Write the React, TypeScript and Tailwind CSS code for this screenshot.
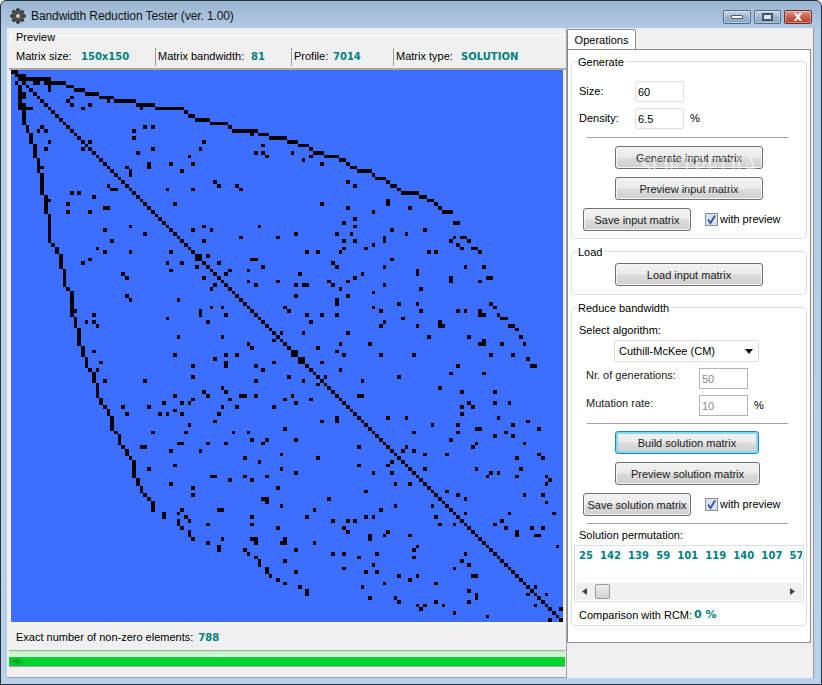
import type { ReactNode } from "react";

// Matrix cells were read from 3x crops, so every list keeps its crop origin.
type Quad = { ox: number; oy: number; dots: string; h: number[][]; v: number[][] };

const quads: Quad[] = [
  {
    ox: 0,
    oy: 60,
    dots: "215,112 204,123 215,134 270,134 248,145 325,123 424,145 435,200 458,200 402,212 402,234 126,200 115,212 137,212 148,245 137,267 248,245 270,245 248,267 612,245 601,267 458,267 413,278 568,289 789,256 767,278 789,278 800,289 756,223 447,311 447,322 513,311 579,311 546,333 381,322 391,333 391,344 126,322 645,366 656,377 711,377 722,388 325,377 336,388 347,388 502,388 579,388 215,399 237,399 281,410 204,432 314,443 325,443 525,432 148,421 204,455 270,455 391,498 612,498 778,498 314,509 579,509 634,509 435,520 722,531 834,531 336,542 612,542 292,564 314,575 391,575 513,575 623,587 270,598 248,608 502,608 546,608 656,608 756,598 767,598 590,620 789,620 513,631 689,631 678,642 745,631 369,642 380,653 612,653 745,664 834,664 645,675 634,686 767,675 381,708 391,719 535,719 634,741 667,741 601,752 601,763 678,763 281,763 502,774 259,785 281,785 292,797 623,785 535,830 667,830 590,587 601,587 590,598 601,598 226,752",
    h: [
      [35, 33, 55], [46, 44, 77], [57, 55, 150], [68, 44, 55], [68, 66, 77], [68, 100, 120], [68, 132, 197],
      [79, 198, 220], [90, 222, 255], [101, 255, 297], [112, 297, 342], [123, 342, 408], [134, 408, 465],
      [145, 465, 552], [156, 552, 563], [167, 563, 585], [178, 585, 630], [189, 630, 685], [200, 685, 696],
      [212, 696, 773], [223, 773, 807], [234, 807, 840], [101, 55, 77], [112, 55, 77], [134, 55, 77], [145, 55, 99],
    ],
    v: [
      [60, 75, 150], [148, 75, 95], [72, 150, 195], [83, 195, 220], [93, 220, 250], [104, 250, 292], [115, 292, 340],
      [126, 340, 404], [137, 404, 460], [148, 460, 548], [159, 548, 559], [170, 559, 582], [183, 582, 626],
      [193, 626, 682], [204, 682, 693], [215, 693, 770], [226, 770, 803], [237, 803, 840],
    ],
  },
  {
    ox: 280,
    oy: 60,
    dots: "37,278 70,300 92,289 126,311 204,366 225,377 126,432 204,443 324,421 324,432 390,443 280,455 225,477 192,488 225,499 48,521 171,521 214,521 336,509 435,509 380,521 192,543 225,543 313,532 313,543 280,554 192,565 258,565 81,576 114,576 181,576 447,576 468,576 336,598 159,609 171,620 313,620 556,620 612,620 60,642 247,642 412,631 412,642 225,653 204,664 147,664 159,675 48,675 70,675 81,675 313,675 513,653 513,664 600,664 622,653 633,653 181,686 423,686 280,697 48,708 204,708 171,719 171,730 357,730 412,730 15,741 26,752 280,741 302,752 423,752 534,752 556,752 600,752 600,763 611,763 81,763 126,763 171,763 369,775 92,785 313,785 302,797 412,797 480,785 480,797 490,797 70,818 204,818 4,818 447,830 567,830 523,532 513,543 534,554 545,565 567,543 545,532 556,532 578,565 589,565 600,576",
    h: [
      [234, 0, 20], [245, 20, 55], [256, 55, 88], [267, 88, 99], [278, 99, 132], [289, 132, 176], [300, 176, 198],
      [311, 198, 209], [322, 209, 231], [333, 231, 275], [344, 275, 286], [355, 286, 319], [366, 319, 330],
      [377, 330, 352], [388, 352, 363], [399, 363, 417], [410, 417, 440], [421, 440, 462], [432, 462, 473],
      [443, 473, 484], [455, 484, 520], [488, 520, 540], [732, 627, 638], [743, 638, 650], [765, 650, 660],
      [775, 660, 684], [797, 684, 705], [808, 705, 716], [830, 716, 728],
    ],
    v: [],
  },
  {
    ox: 0,
    oy: 340,
    dots: "745,12 756,23 822,2 281,34 525,45 678,45 711,45 645,56 303,67 822,67 579,78 678,67 678,78 767,78 292,89 789,89 579,111 315,122 435,122 767,122 667,144 612,155 678,155 525,167 623,167 722,167 733,167 767,167 690,178 579,178 568,188 546,188 491,188 369,200 447,200 667,200 711,200 822,200 525,211 381,222 480,222 502,222 546,222 656,222 645,244 568,255 458,277 557,277 700,277 745,277 756,299 800,299 789,310 535,310 546,310 623,310 678,310 425,321 436,321 513,332 601,332 735,354 778,365 525,376 447,387 635,409 646,409 735,409 800,409 690,420 756,420 513,432 579,443 834,443 579,465 789,477 800,477 800,487 546,509 656,509 667,509 535,520 558,531 756,531 568,543 535,543 535,553 624,553 756,553 546,564 834,564 568,575 568,586 579,597 667,597 756,597 767,597 767,608 624,608 656,620 656,631 735,630 745,642 767,653 778,664 778,675 800,686 800,697 811,708 834,719",
    h: [],
    v: [
      [237, 0, 17], [248, 17, 50], [259, 50, 83], [270, 83, 95], [281, 95, 128], [292, 128, 172], [303, 172, 194],
      [314, 194, 205], [325, 205, 227], [336, 227, 272], [347, 272, 283], [358, 283, 315], [369, 315, 327],
      [380, 327, 348], [391, 348, 360], [402, 360, 413], [413, 413, 437], [424, 437, 459], [435, 459, 470],
      [447, 470, 482], [458, 482, 515], [491, 515, 537],
    ],
  },
  {
    ox: 280,
    oy: 340,
    dots: "114,23 181,12 270,12 600,12 611,12 611,4 666,12 733,12 170,34 192,45 303,45 402,45 633,45 699,45 744,56 126,67 755,78 766,78 534,78 181,89 513,100 612,100 27,111 70,122 114,111 136,111 247,122 357,111 114,133 480,144 546,155 645,155 37,167 15,178 48,188 92,178 237,167 247,167 567,188 645,188 689,188 546,200 579,200 546,222 324,233 380,233 656,233 170,233 170,244 126,244 744,244 458,255 534,255 699,255 15,266 590,266 601,266 777,266 402,277 534,277 678,277 645,288 699,288 48,299 513,299 733,310 589,310 578,321 237,321 380,321 369,332 402,332 435,343 501,343 777,343 4,343 114,354 711,354 789,354 336,365 324,376 237,376 4,387 435,387 590,387 722,387 48,399 280,399 336,399 633,399 656,399 622,410 711,410 800,410 810,420 800,432 346,432 390,432 258,454 501,454 147,477 534,465 556,477 733,465 789,465 800,487 4,498 346,498 458,498 103,510 303,510 556,520 689,520 822,520 81,531 258,531 280,531 468,531 159,543 204,543 225,543 480,553 523,553 645,553 666,543 192,564 678,564 756,564 789,564 204,576 324,576 314,586 270,587 270,597 390,587 711,576 711,586 766,586 777,586 15,597 4,608 15,608 103,608 412,620 402,630 48,630 832,620 159,642 192,642 291,642 556,642 237,653 402,653 15,663 546,663 280,675 567,675 192,686 523,686 48,696 258,696 291,696 357,708 412,708 578,708 589,708 390,719 15,730 314,730 468,730 60,741 247,741 81,752 81,763 567,752 589,763 589,774 270,774 346,774 357,786 468,786 567,786 412,797 435,797 423,807 490,797 523,819 622,829 766,741 744,763 799,763 766,797 843,807 810,840 843,840 38,34 49,34 38,45 49,45 60,56 71,56 60,67 71,67",
    h: [],
    v: [],
  },
];

const CELL = 11.04;

const buildCells = () => {
  const seen = new Set<string>();
  const add = (c: number, r: number) => {
    if (c >= 0 && c < 150 && r >= 0 && r < 150) seen.add(c + "," + r);
  };
  for (let i = 0; i < 150; i++) add(i, i);
  for (const q of quads) {
    const bx = 3 * q.ox - 33;
    const by = 3 * q.oy - 210;
    const fill = (x1: number, y1: number, x2: number, y2: number) => {
      for (let c = Math.floor((x1 + bx) / CELL) - 1; c <= (x2 + bx) / CELL + 1; c++) {
        for (let r = Math.floor((y1 + by) / CELL) - 1; r <= (y2 + by) / CELL + 1; r++) {
          const cx = (c + 0.5) * CELL - bx;
          const cy = (r + 0.5) * CELL - by;
          if (cx >= x1 && cx <= x2 && cy >= y1 && cy <= y2) add(c, r);
        }
      }
    };
    for (const d of q.dots.split(" ")) {
      const [x, y] = d.split(",").map(Number);
      add(Math.floor((x + bx) / CELL), Math.floor((y + by) / CELL));
    }
    for (const [y, x1, x2] of q.h) fill(x1, y - 5, x2, y + 5);
    for (const [x, y1, y2] of q.v) fill(x - 5, y1, x + 5, y2);
  }
  return [...seen].map((s) => s.split(",").map(Number));
};

const cells = buildCells();

const Value = ({ children, className = "" }: { children: ReactNode; className?: string }) => (
  <span className={"font-['DejaVu_Sans'] text-[10px] font-bold text-[#008080] " + className}>{children}</span>
);

const Button = ({ label, className = "" }: { label: string; className?: string }) => (
  <button
    className={
      "h-[23px] shrink-0 rounded-[3px] border border-[#707070] bg-[linear-gradient(#f2f2f2,#ebebeb_48%,#dcdcdc_52%,#cfcfcf)] text-center leading-[20px] text-[#1a1a1a] shadow-[inset_0_0_0_1px_#f6f6f6] " +
      className
    }
  >
    {label}
  </button>
);

const Field = ({ value, disabled = false }: { value: string; disabled?: boolean }) => (
  <div
    className={
      "h-[21px] w-[49px] shrink-0 border bg-white pl-[2px] leading-[20px] " +
      (disabled ? "border-[#b4b4b4] text-[#8a8a8a]" : "rounded-[2px] border-[#dbdfe6] text-black")
    }
  >
    {value}
  </div>
);

const PreviewCheck = () => (
  <div className="ml-[14px] flex items-center gap-[2px]">
    <div className="flex h-[13px] w-[13px] items-center justify-center border border-[#8e8f8f] bg-[#d8e3f0]">
      <svg width="11" height="11" viewBox="0 0 11 11">
        <path d="M2 5.5 L4.5 9 L9 1.5" fill="none" stroke="#3a50a8" strokeWidth="1.8" />
      </svg>
    </div>
    <span>with preview</span>
  </div>
);

const Group = ({ title, className, children }: { title: string; className: string; children: ReactNode }) => (
  <div className={"relative mx-[3px] rounded-[4px] border border-[#d9dfe8] " + className}>
    <span className="absolute left-[5px] top-[-7px] bg-white pl-[1px] pr-[2px] leading-[14px]">{title}</span>
    {children}
  </div>
);

const Rule = ({ className = "" }: { className?: string }) => (
  <div className={"ml-[15px] h-px w-[201px] bg-[#a0a0a0] " + className} />
);

const Gear = () => (
  <svg width="16" height="16" viewBox="0 0 16 16" className="shrink-0">
    <g fill="#3c3c3c">
      {[0, 45, 90, 135, 180, 225, 270, 315].map((a) => (
        <rect key={a} x="6.5" y="0.5" width="3" height="15" transform={`rotate(${a} 8 8)`} />
      ))}
    </g>
    <circle cx="8" cy="8" r="5.5" fill="#555" stroke="#2c2c2c" strokeWidth="0.8" />
    <circle cx="8" cy="8" r="2.6" fill="#c8c8c8" stroke="#222" strokeWidth="0.8" />
  </svg>
);

const WinButton = ({ className, children }: { className: string; children: ReactNode }) => (
  <div
    className={
      "flex h-[14px] items-center justify-center rounded-[2px] border border-[#4f6b88] shadow-[inset_0_0_0_1px_#ffffff66] " +
      className
    }
  >
    {children}
  </div>
);

export default function App() {
  return (
    <div className="h-[685px] w-[822px] overflow-hidden bg-white font-['Liberation_Sans',sans-serif] text-[11px] text-black">
      <div className="relative flex h-full flex-col rounded-t-[6px] border border-[#26323c] bg-[linear-gradient(#9bb6d2,#b4cce6_30px,#b9d1ea)]">
        {/* title bar */}
        <div className="flex h-[27px] shrink-0 items-center pl-[9px] pt-[3px]">
          <Gear />
          <span className="ml-[5px] text-[12px] tracking-[-0.1px] text-[#111]">Bandwidth Reduction Tester (ver. 1.00)</span>
          <div className="ml-auto mr-[9px] mt-[6px] flex gap-[3px] self-start">
            <WinButton className="w-[28px] bg-[linear-gradient(#c6d6e6,#9db6cf_50%,#86a3c0)]">
              <div className="h-[4px] w-[12px] rounded-[1px] border border-[#4a5a6a] bg-white" />
            </WinButton>
            <WinButton className="w-[27px] bg-[linear-gradient(#c6d6e6,#9db6cf_50%,#86a3c0)]">
              <div className="h-[8px] w-[11px] border-2 border-[#44546a] bg-[#dde6ef]" />
            </WinButton>
            <WinButton className="w-[28px] border-[#6b2a2a] bg-[linear-gradient(#dc9a90,#c8604f_50%,#b23a2a)]">
              <span className="font-['DejaVu_Sans'] text-[11px] font-bold leading-none text-white">X</span>
            </WinButton>
          </div>
        </div>

        {/* client area */}
        <div className="ml-[6px] flex h-[650px] w-[807px] shrink-0 border-r border-[#9a9a9a] bg-[#f0f0f0]">
          {/* preview side */}
          <div className="flex w-[560px] shrink-0 flex-col border-b border-r border-[#a0a0a0] pl-[2px] pt-[7px]">
            <div className="relative ml-[1px] h-[10px] rounded-tl-[3px] border-l border-t border-white">
              <span className="absolute left-[4px] top-[-6px] bg-[#f0f0f0] px-[1px] leading-[14px]">Preview</span>
            </div>
            <div className="flex h-[25px] items-center border-b-2 border-[#a8a8a8]">
              <div className="flex w-[146px] items-center pl-[7px]">
                <span className="w-[65px]">Matrix size:</span>
                <Value>150x150</Value>
              </div>
              <div className="flex h-[18px] w-[136px] items-center border-l border-[#9a9a9a] pl-[2px]">
                <span className="w-[93px]">Matrix bandwidth:</span>
                <Value>81</Value>
              </div>
              <div className="flex h-[18px] w-[102px] items-center border-l border-[#9a9a9a] pl-[2px]">
                <span className="w-[39px]">Profile:</span>
                <Value>7014</Value>
              </div>
              <div className="flex h-[18px] items-center border-l border-[#9a9a9a] pl-[2px]">
                <span className="w-[65px]">Matrix type:</span>
                <Value>SOLUTION</Value>
              </div>
            </div>
            <div className="ml-[2px] h-[552px] w-[552px] shrink-0 bg-[#3c6eff]">
              <svg width="552" height="552" viewBox="0 0 150 150" shapeRendering="crispEdges" className="block">
                {cells.map(([c, r]) => (
                  <rect key={c + "-" + r} x={c} y={r} width="1" height="1" fill="#000" />
                ))}
              </svg>
            </div>
            <div className="mt-px h-px w-[556px] bg-white" />
            <div className="flex h-[26px] items-center pl-[7px]">
              <span>Exact number of non-zero elements:</span>
              <Value className="ml-[5px]">788</Value>
            </div>
            <div className="relative h-[17px] w-[556px] overflow-hidden border-y border-[#a8a8a8] bg-[linear-gradient(#bdf2bd,#dcfadc_40%,#02d62c_42%,#02d62c_80%,#12c83a)]">
              <div className="absolute left-0 top-[6px] h-[9px] w-[16px] bg-[radial-gradient(closest-side,#0a9a2a,transparent)]" />
            </div>
          </div>

          {/* operations side */}
          <div className="flex flex-col pt-px">
            <div className="flex h-[21px] w-[69px] items-center justify-center rounded-t-[2px] border border-b-0 border-[#8d8d8d] bg-white">
              Operations
            </div>
            <div className="mt-[-1px] h-[594px] w-[244px] border border-[#8d8d8d] bg-white pt-[11px]">
              <Group title="Generate" className="h-[178px]">
                <div className="mt-[19px] flex h-[21px] items-center pl-[7px]">
                  <span className="w-[56px]">Size:</span>
                  <Field value="60" />
                </div>
                <div className="mt-[6px] flex h-[21px] items-center pl-[7px]">
                  <span className="w-[56px]">Density:</span>
                  <Field value="6.5" />
                  <span className="ml-[6px]">%</span>
                </div>
                <Rule className="mt-[8px]" />
                <Button label="Generate input matrix" className="ml-[43px] mt-[8px] block w-[148px]" />
                <Button label="Preview input matrix" className="ml-[43px] mt-[8px] block w-[148px]" />
                <div className="mt-[8px] flex items-center pl-[11px]">
                  <Button label="Save input matrix" className="w-[108px]" />
                  <PreviewCheck />
                </div>
              </Group>

              <Group title="Load" className="mt-[12px] h-[44px]">
                <Button label="Load input matrix" className="ml-[43px] mt-[11px] block w-[148px]" />
              </Group>

              <Group title="Reduce bandwidth" className="mt-[12px] h-[319px]">
                <div className="mt-[15px] h-[14px] pl-[7px] leading-[14px]">Select algorithm:</div>
                <div className="ml-[42px] mt-[3px] flex h-[22px] w-[145px] items-center rounded-[2px] border border-[#dbdfe6] bg-white pl-[4px] pr-[5px]">
                  <span>Cuthill-McKee (CM)</span>
                  <svg width="8" height="5" viewBox="0 0 8 5" className="ml-auto">
                    <path d="M0 0H8L4 5Z" fill="#111" />
                  </svg>
                </div>
                <div className="mt-[6px] flex h-[21px] items-center pl-[14px]">
                  <span className="mb-[6px] w-[113px] text-[#1a1a1a]">Nr. of generations:</span>
                  <Field value="50" disabled />
                </div>
                <div className="mt-[6px] flex h-[21px] items-center pl-[14px]">
                  <span className="mb-[4px] w-[113px] text-[#1a1a1a]">Mutation rate:</span>
                  <Field value="10" disabled />
                  <span className="ml-[6px]">%</span>
                </div>
                <Rule className="mt-[7px]" />
                <button className="ml-[43px] mt-[7px] block h-[23px] w-[144px] rounded-[3px] border border-[#2c7fb8] bg-[linear-gradient(#f2f2f2,#ebebeb_48%,#dcdcdc_52%,#cfcfcf)] text-center leading-[20px] text-[#1a1a1a] shadow-[inset_0_0_0_2px_#7fdcf5]">
                  Build solution matrix
                </button>
                <Button label="Preview solution matrix" className="ml-[43px] mt-[8px] block w-[145px]" />
                <div className="mt-[8px] flex items-center pl-[11px]">
                  <Button label="Save solution matrix" className="w-[108px]" />
                  <PreviewCheck />
                </div>
                <Rule className="mt-[7px]" />
                <div className="mt-[4px] h-[14px] pl-[7px] leading-[14px]">Solution permutation:</div>
                <div className="ml-[2px] mt-[3px] h-[57px] w-[230px] border border-[#dbdfe6] bg-white pl-[1px] pr-[1px] pt-[1px]">
                  <div className="h-[36px] w-full overflow-hidden whitespace-nowrap pl-[3px]">
                    <Value className="tracking-[0.05px] [word-spacing:3.5px]">25 142 139 59 101 119 140 107 57 88 12 33</Value>
                  </div>
                  <div className="flex h-[17px] items-center bg-[#f0f0f0] pl-[6px] pr-[7px]">
                    <svg width="5" height="7" viewBox="0 0 5 7"><path d="M5 0V7L0 3.5Z" fill="#444" /></svg>
                    <div className="ml-[8px] h-[15px] w-[15px] rounded-[2px] border border-[#9a9a9a] bg-[linear-gradient(#eeeeee,#d2d2d2)]" />
                    <svg width="5" height="7" viewBox="0 0 5 7" className="ml-auto"><path d="M0 0V7L5 3.5Z" fill="#444" /></svg>
                  </div>
                </div>
                <div className="flex h-[24px] items-center pl-[7px] pt-[2px]">
                  <span>Comparison with RCM:</span>
                  <Value className="ml-[2px] text-[11px]">0 %</Value>
                </div>
              </Group>
            </div>
          </div>
        </div>

        {/* site watermark over the buttons */}
        <div className="pointer-events-none absolute left-[639px] top-[150px] font-['Liberation_Serif',serif] text-white opacity-50">
          <div className="origin-top scale-y-[1.3] text-[22px] leading-[24px]">SOFTPEDIA</div>
          <div className="ml-[32px] mt-[6px] text-[9px] leading-[10px]">www.softpedia.com</div>
        </div>
      </div>
    </div>
  );
}
